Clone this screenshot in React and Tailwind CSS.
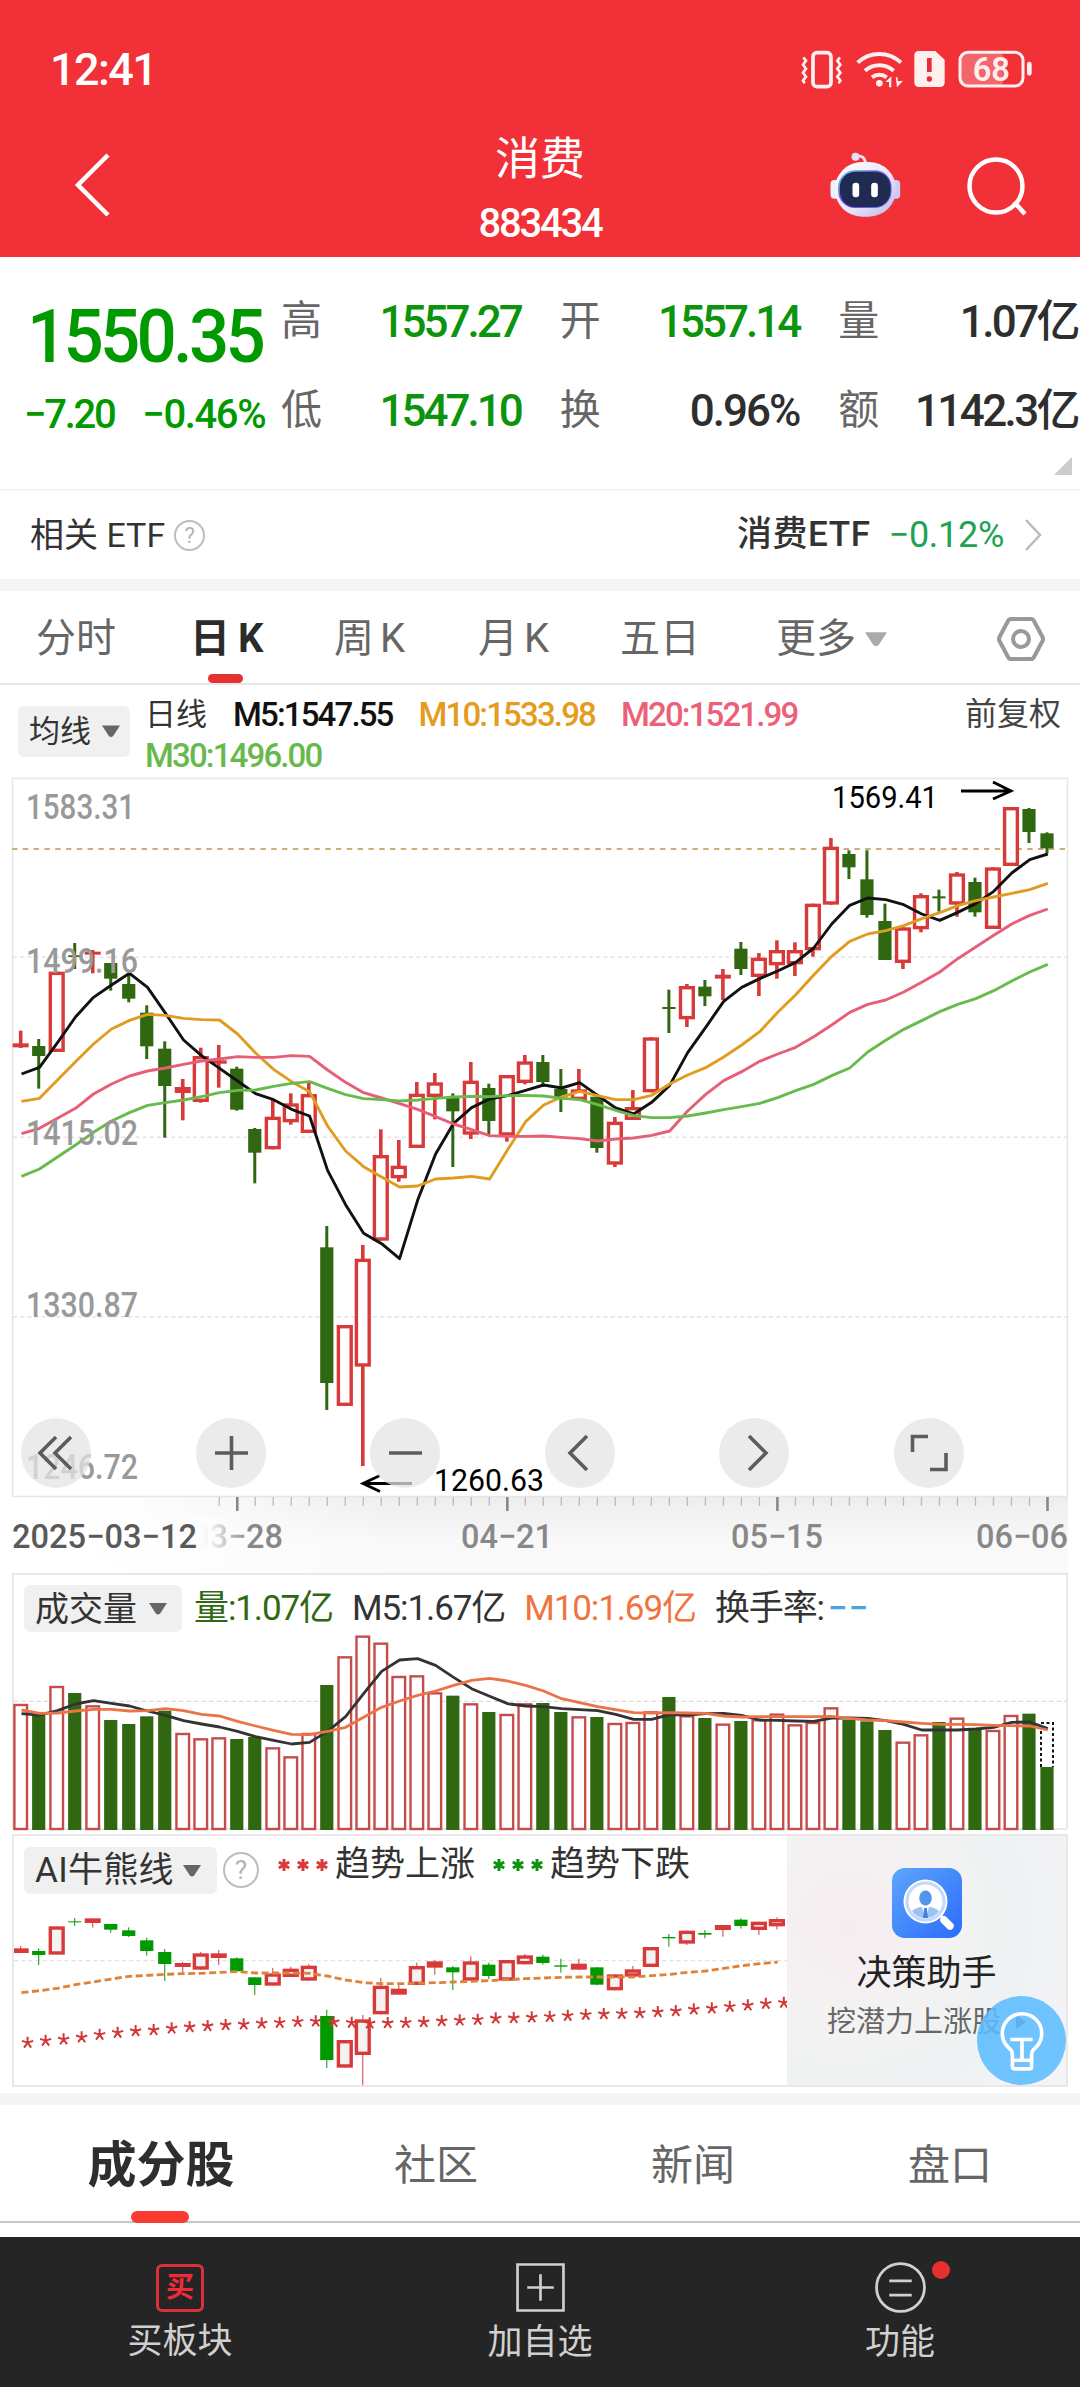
import clsx from "clsx";

// Chart points are kept in thirds of a pixel, measured from the top of each panel's canvas.
const STEP = 18.005;
const cx = (i) => 20.7 + i * STEP;

// [direction, high, bodyTop, bodyBottom, low]
const CANDLES = [
  ["r", 782, 820, 832, 834], ["g", 807, 828, 858, 956], ["r", 605, 605, 846, 846], ["g", 519, 556, 561, 597],
  ["r", 540, 545, 554, 610], ["g", 579, 579, 626, 662], ["g", 612, 642, 686, 697], ["g", 706, 728, 829, 867],
  ["g", 814, 836, 948, 1103], ["r", 927, 951, 969, 1051], ["r", 833, 858, 996, 998], ["r", 825, 871, 881, 953],
  ["g", 890, 896, 1019, 1022], ["g", 1074, 1077, 1148, 1240], ["r", 987, 1040, 1138, 1138], ["r", 970, 1000, 1057, 1064],
  ["r", 938, 972, 1089, 1089], ["g", 1368, 1432, 1839, 1920], ["r", 1665, 1665, 1908, 1908], ["r", 1425, 1466, 1790, 2088],
  ["r", 1078, 1155, 1412, 1412], ["r", 1110, 1187, 1225, 1235], ["r", 936, 971, 1134, 1134], ["r", 909, 937, 981, 1048],
  ["g", 970, 981, 1024, 1191], ["r", 876, 932, 1094, 1107], ["g", 941, 954, 1053, 1094], ["r", 915, 915, 1097, 1115],
  ["r", 855, 874, 939, 943], ["g", 855, 876, 936, 951], ["g", 897, 957, 982, 1026], ["r", 897, 958, 990, 990],
  ["g", 972, 980, 1134, 1148], ["r", 1041, 1055, 1184, 1191], ["r", 960, 1011, 1050, 1050], ["r", 802, 802, 967, 967],
  ["g", 659, 711, 717, 789], ["r", 642, 648, 748, 771], ["g", 630, 650, 679, 708], ["r", 597, 614, 626, 690],
  ["g", 516, 536, 597, 615], ["r", 549, 563, 621, 678], ["r", 511, 540, 586, 626], ["r", 517, 540, 583, 618],
  ["r", 401, 401, 541, 560], ["r", 204, 230, 404, 404], ["g", 241, 252, 292, 327], ["g", 241, 328, 435, 443],
  ["g", 401, 453, 570, 570], ["r", 472, 472, 579, 597], ["r", 370, 375, 478, 487], ["g", 359, 379, 385, 425],
  ["r", 306, 310, 404, 440], ["g", 323, 336, 427, 440], ["r", 292, 292, 477, 477], ["r", 111, 111, 288, 288],
  ["g", 114, 117, 186, 219], ["g", 187, 190, 235, 250],
];

const MA5 = [912, 892, 818, 741, 682, 645, 610, 652, 730, 810, 857, 895, 933, 971, 989, 1018, 1038, 1201, 1304, 1390, 1421, 1466, 1291, 1152, 1060, 1013, 987, 977, 961, 945, 954, 938, 976, 1014, 1032, 997, 946, 848, 772, 694, 652, 626, 603, 577, 534, 462, 406, 384, 389, 404, 432, 451, 427, 401, 364, 309, 269, 252];
const MA10 = [994, 985, 930, 875, 822, 777, 751, 733, 736, 745, 749, 750, 792, 849, 898, 935, 965, 1068, 1143, 1190, 1221, 1251, 1248, 1227, 1224, 1219, 1227, 1139, 1055, 1005, 981, 964, 977, 989, 989, 976, 942, 915, 893, 861, 825, 785, 727, 674, 615, 559, 514, 492, 482, 467, 446, 428, 407, 392, 381, 370, 359, 340];
const MA20 = [1091, 1075, 1045, 1015, 972, 942, 918, 903, 894, 883, 873, 867, 860, 862, 862, 857, 859, 900, 937, 968, 984, 1001, 1018, 1040, 1062, 1079, 1097, 1099, 1099, 1098, 1102, 1106, 1113, 1107, 1104, 1096, 1083, 1023, 973, 932, 905, 874, 852, 832, 800, 765, 727, 703, 690, 666, 637, 606, 566, 531, 496, 462, 436, 417];
const MA30 = [1219, 1197, 1161, 1125, 1087, 1053, 1028, 1006, 998, 990, 980, 968, 961, 960, 949, 940, 935, 955, 974, 986, 989, 993, 990, 985, 981, 979, 980, 977, 976, 978, 985, 989, 1004, 1021, 1037, 1043, 1043, 1038, 1029, 1019, 1010, 1000, 983, 962, 943, 917, 894, 846, 811, 778, 752, 725, 703, 686, 662, 633, 606, 583];

const VOLUMES = [432, 462, 378, 399, 436, 480, 492, 469, 452, 519, 535, 532, 537, 531, 562, 589, 519, 375, 289, 227, 248, 348, 346, 397, 407, 430, 456, 462, 430, 429, 456, 469, 471, 489, 486, 454, 411, 466, 474, 491, 483, 478, 461, 493, 486, 442, 480, 484, 510, 545, 523, 486, 473, 508, 510, 465, 461, 620];
const VMA5 = [461, 465, 452, 432, 422, 430, 438, 453, 466, 482, 492, 501, 514, 530, 541, 552, 547, 514, 470, 401, 334, 300, 296, 316, 352, 386, 409, 431, 438, 440, 446, 449, 452, 463, 478, 478, 464, 465, 461, 460, 466, 480, 481, 483, 484, 474, 474, 475, 482, 493, 510, 510, 510, 507, 502, 487, 486, 506];
const VMA10 = [450, 460, 459, 453, 448, 448, 453, 452, 446, 452, 463, 468, 484, 498, 511, 523, 524, 514, 502, 472, 442, 423, 406, 393, 376, 361, 355, 363, 376, 393, 416, 428, 440, 449, 458, 459, 458, 459, 460, 468, 471, 470, 470, 470, 470, 469, 475, 480, 482, 486, 490, 493, 493, 494, 496, 497, 498, 510];

const AI_CANDLES = [
  ["r", 348, 355, 369, 369], ["g", 355, 363, 375, 405], ["r", 289, 289, 374, 374], ["g", 264, 274, 277, 288],
  ["r", 265, 265, 279, 293], ["g", 282, 282, 299, 308], ["g", 292, 301, 318, 321], ["g", 323, 331, 363, 377],
  ["g", 357, 366, 402, 453], ["r", 396, 399, 411, 430], ["r", 366, 370, 419, 419], ["r", 360, 370, 384, 405],
  ["g", 382, 385, 424, 424], ["g", 442, 442, 465, 495], ["r", 414, 430, 467, 467], ["r", 410, 416, 441, 441],
  ["r", 402, 407, 452, 452], ["g", 539, 558, 690, 714], ["r", 630, 630, 713, 713], ["r", 555, 568, 675, 768],
  ["r", 444, 467, 553, 553], ["r", 460, 476, 494, 494], ["r", 398, 408, 465, 465], ["r", 390, 394, 413, 434],
  ["g", 408, 412, 427, 480], ["r", 379, 394, 452, 452], ["g", 398, 404, 438, 448], ["r", 390, 390, 452, 452],
  ["r", 372, 376, 403, 403], ["g", 374, 380, 399, 404], ["g", 386, 406, 410, 428], ["r", 386, 401, 419, 419],
  ["g", 412, 412, 464, 466], ["r", 433, 433, 481, 481], ["r", 408, 418, 440, 440], ["r", 351, 351, 411, 411],
  ["g", 312, 321, 325, 350], ["r", 302, 302, 341, 345], ["g", 300, 309, 314, 325], ["r", 285, 285, 300, 320],
  ["g", 265, 269, 288, 296], ["r", 275, 275, 300, 315], ["r", 262, 267, 289, 298],
];
const AI_LINE = [488, 482, 475, 464, 456, 447, 439, 436, 433, 431, 430, 427, 425, 429, 429, 429, 430, 438, 450, 458, 461, 461, 460, 458, 456, 454, 452, 449, 446, 444, 442, 441, 441, 441, 441, 437, 433, 427, 423, 415, 407, 401, 396];
const AI_STARS = [638, 632, 628, 622, 614, 608, 603, 600, 595, 591, 588, 585, 583, 580, 578, 575, 574, 576, 578, 580, 579, 578, 576, 573, 571, 569, 565, 564, 562, 560, 557, 554, 552, 551, 549, 546, 543, 538, 535, 530, 526, 521, 518];

const STATS = [
  { label: "高", value: "1557.27", tone: "tracking-[-3px] text-[#0d940d]" },
  { label: "开", value: "1557.14", tone: "tracking-[-3px] text-[#0d940d]" },
  { label: "量", value: "1.07亿", tone: "tracking-[-2.600px] text-[#2e2e2e]" },
  { label: "低", value: "1547.10", tone: "tracking-[-3px] text-[#0d940d]" },
  { label: "换", value: "0.96%", tone: "tracking-[-2px] text-[#2e2e2e]" },
  { label: "额", value: "1142.3亿", tone: "tracking-[-2.600px] text-[#2e2e2e]" },
];

const points = (list) => list.map((v, i) => `${cx(i) + 0.8},${v / 3}`).join(" ");

function Candle({ i, data, green, wick, fill = "#fff" }) {
  const [dir, h, t, b, l] = data.map((v) => (typeof v === "number" ? v / 3 : v));
  const x = cx(i);
  if (dir === "g") {
    return (
      <g fill={green}>
        <rect x={x - wick / 2} y={h} width={wick} height={l - h} />
        <rect x={x - 6.6} y={t} width="13.2" height={b - t} />
      </g>
    );
  }
  const solid = b - t < 6.5;
  return (
    <g fill="#d83a3a">
      <rect x={x - wick / 2} y={h} width={wick} height={l - h} />
      {solid ? (
        <rect x={x - 8} y={t} width="16" height={b - t} />
      ) : (
        <rect x={x - 6.4} y={t + 1.7} width="12.8" height={b - t - 3.4} fill={fill} stroke="#d83a3a" strokeWidth="3.4" />
      )}
    </g>
  );
}

function Star({ x, y }) {
  return (
    <path
      d={`M${x} ${y}v-6M${x} ${y}l5.6-1.8M${x} ${y}l3.5 4.9M${x} ${y}l-3.5 4.9M${x} ${y}l-5.6-1.8`}
      stroke="#d03838"
      strokeWidth="2"
      fill="none"
    />
  );
}

function Caret({ className }) {
  return (
    <svg viewBox="0 0 18 12" className={clsx("shrink-0", className)}>
      <path d="M0 0h18l-6.500 10q-2.500 3-5 0z" fill="currentColor" />
    </svg>
  );
}

function HelpMark({ className, children = "?" }) {
  return (
    <span className={clsx("flex shrink-0 items-center justify-center rounded-full border-2 border-[#bdbdbd] text-[#b3b3b3]", className)}>
      {children}
    </span>
  );
}

function StatusBar() {
  return (
    <div className="flex h-[138px] items-start justify-between pt-[46px] pr-[46px] pl-[50px]">
      <div className="text-[45px]/[48px] font-medium tracking-[-1.600px]">12:41</div>
      <svg viewBox="36 0 702 120" className="mt-[4px] h-[40px] w-[234px]" fill="none" stroke="#fff0f0">
        <rect x="75" y="8" width="54" height="102" rx="12" strokeWidth="11" />
        <path d="M46 22l8 10-9 12 9 12-9 12 9 12-9 12 5 8M156 22l-8 10 9 12-9 12 9 12-9 12 9 12-5 8" strokeWidth="8" />
        <path d="M209 38a94 94 0 0 1 130 0M231 62a64 64 0 0 1 86 0M252 82a36 36 0 0 1 44 0" strokeWidth="12" />
        <circle cx="274" cy="100" r="10" fill="#fff0f0" stroke="none" />
        <path d="M292 96l18-17v33h-7V96zM323 80v32V82h6v12l16-2-18 20z" fill="#fff0f0" stroke="none" />
        <path d="M393 3h49l28 26v68q0 14-14 14h-63q-14 0-14-14V17q0-14 14-14z" fill="#fff0f0" stroke="none" />
        <path d="M424 24v42" stroke="#e72d36" strokeWidth="14" />
        <circle cx="424" cy="87" r="8" fill="#e72d36" stroke="none" />
        <path d="M534 7h110v100H534q-18 0-18-18V25q0-18 18-18z" fill="#f5666b" stroke="none" />
        <rect x="516" y="7" width="189" height="101" rx="24" strokeWidth="9" />
        <path d="M724 42v28" strokeWidth="14" strokeLinecap="round" />
        <text x="610" y="93" textAnchor="middle" fontFamily="Roboto" fontWeight="600" fontSize="98" textLength="112" lengthAdjust="spacingAndGlyphs" fill="#fff0f0" stroke="none">68</text>
      </svg>
    </div>
  );
}

function Robot() {
  return (
    <svg viewBox="0 0 212 198" className="h-[66px] w-[71px]">
      <defs>
        <linearGradient id="shell" x1="0" y1="0" x2="1" y2="1">
          <stop offset="0" stopColor="#fff" />
          <stop offset=".55" stopColor="#e9e6fa" />
          <stop offset="1" stopColor="#b9b5ea" />
        </linearGradient>
        <linearGradient id="visor" x1="0" y1="0" x2="1" y2="1">
          <stop offset="0" stopColor="#5fd6df" />
          <stop offset=".5" stopColor="#7d3fe0" />
          <stop offset="1" stopColor="#5f7bf0" />
        </linearGradient>
      </defs>
      <path d="M76 12q28-4 30 22" stroke="#eceafb" strokeWidth="8" fill="none" />
      <circle cx="76" cy="14" r="12" fill="#e3e0f8" />
      <rect x="1" y="84" width="28" height="56" rx="12" fill="#f1effc" />
      <rect x="182" y="84" width="28" height="56" rx="12" fill="#cfcaf4" />
      <rect x="14" y="30" width="184" height="164" rx="82" fill="url(#shell)" />
      <rect x="24" y="55" width="160" height="113" rx="50" fill="url(#visor)" />
      <rect x="29" y="59" width="152" height="106" rx="47" fill="#1f2b50" />
      <rect x="67" y="92" width="20" height="44" rx="9" fill="#fff" />
      <rect x="123" y="92" width="20" height="44" rx="9" fill="#fff" />
    </svg>
  );
}

function Header() {
  return (
    <header className="h-[257px] bg-[#f13037] text-white">
      <StatusBar />
      <div className="flex h-[110px] items-start">
        <div className="w-[360px] pt-[14px] pl-[74px]">
          <svg viewBox="0 0 36 66" className="h-[66px] w-[36px]">
            <path d="M34 3L4 33l30 30" fill="none" stroke="#fff" strokeWidth="4.500" />
          </svg>
        </div>
        <div className="w-[360px] text-center">
          <h1 className="pt-[2px] text-[45px]/[40px]">消费</h1>
          <p className="mt-[24px] text-[40px]/[40px] font-medium tracking-[-2.200px]">883434</p>
        </div>
        <div className="flex w-[360px] justify-end gap-[66px] pt-[14px] pr-[53px]">
          <Robot />
          <svg viewBox="0 0 60 60" className="mt-[5px] h-[60px] w-[60px]" fill="none" stroke="#fff">
            <circle cx="29" cy="29" r="26.500" strokeWidth="4.500" />
            <path d="M47 45l11 12" strokeWidth="4.500" />
          </svg>
        </div>
      </div>
    </header>
  );
}

function Quote() {
  return (
    <section className="flex h-[234px] border-b-2 border-[#f4f4f4]">
      <div className="w-[281px] text-[#009900]">
        <div className="mt-[42px] ml-[27px] origin-left scale-x-[.945] text-[75px]/[75px] font-medium tracking-[-4px]">1550.35</div>
        <div className="mt-[21px] ml-[24px] flex gap-[28px] text-[40px]/[40px] font-medium tracking-[-2.300px]">
          <span>−7.20</span>
          <span className="tracking-[-1.400px]">−0.46%</span>
        </div>
      </div>
      <div className="flex flex-1 flex-col">
        <div className="grid grid-cols-3 gap-x-[37px] pt-[35px]">
          {STATS.map((s) => (
            <div key={s.label} className="mb-[29px] flex h-[60px] items-center justify-between">
              <span className="text-[41px] text-[#666]">{s.label}</span>
              <span className={clsx("pr-[2px] text-[44px] font-medium", s.tone)}>{s.value}</span>
            </div>
          ))}
        </div>
        <svg viewBox="0 0 18 18" className="-mt-[13px] mr-[8px] h-[18px] w-[18px] self-end">
          <path d="M18 0v18H0z" fill="#ccc" />
        </svg>
      </div>
    </section>
  );
}

function RelatedEtf() {
  return (
    <section className="flex h-[88px] items-center justify-between pr-[38px] pl-[30px]">
      <div className="flex items-center gap-[9px] text-[34px] text-[#333]">
        <span>相关 ETF</span>
        <HelpMark className="h-[31px] w-[31px] text-[22px]" />
      </div>
      <div className="flex items-center text-[35px] font-medium text-[#333]">
        <span className="tracking-[.600px]">消费ETF</span>
        <span className="ml-[18px] text-[36px] font-normal tracking-[-0.300px] text-[#21a352]">−0.12%</span>
        <svg viewBox="0 0 18 32" className="ml-[20px] h-[32px] w-[18px]">
          <path d="M2 1l14 15L2 31" fill="none" stroke="#bbb" strokeWidth="2.500" />
        </svg>
      </div>
    </section>
  );
}

function PeriodTabs() {
  return (
    <nav className="flex h-[106px] items-center border-t-[12px] border-b-2 border-t-[#f4f4f4] border-b-[#e8e8e8] pt-[4px] pl-[36px] text-[40px] text-[#666]">
      <span className="w-[154px]">分时</span>
      <span className="relative flex w-[144px] items-center gap-[8px] font-bold text-[#2b2b2b]">
        日<span>K</span>
        <i className="absolute top-[65px] left-[18px] h-[9px] w-[35px] rounded-full bg-[#e63131]" />
      </span>
      <span className="flex w-[144px] gap-[6px]">周<span>K</span></span>
      <span className="flex w-[142px] gap-[6px]">月<span>K</span></span>
      <span className="w-[156px]">五日</span>
      <span className="flex items-center gap-[9px]">
        更多
        <Caret className="h-[19px] w-[22px] text-[#aaa]" />
      </span>
      <svg viewBox="0 0 48 46" className="mr-[35px] ml-auto h-[46px] w-[48px]" fill="none" stroke="#999" strokeWidth="4">
        <path d="M14 3h20q2 0 3 2l8.500 16q1 2 0 4L37 41q-1 2-3 2H14q-2 0-3-2L2.500 25q-1-2 0-4L11 5q1-2 3-2z" />
        <circle cx="24" cy="23" r="8" />
      </svg>
    </nav>
  );
}

function MaLegend() {
  return (
    <div className="flex h-[92px] items-start text-[33px]/[41px] font-medium tracking-[-1.850px]">
      <button className="mt-[21px] ml-[18px] flex h-[51px] w-[112px] items-center gap-[11px] rounded-[6px] bg-[#f0f0f0] pl-[11px] text-[31px] font-normal tracking-normal text-[#333]">
        均线
        <Caret className="h-[13px] w-[18px] text-[#666]" />
      </button>
      <div className="ml-[15px] flex w-[700px] flex-wrap gap-x-[26px] pt-[9px]">
        <span className="text-[31px] font-normal tracking-normal text-[#333]">日线</span>
        <span className="text-[#111]">M5:1547.55</span>
        <span className="text-[#e39c1c]">M10:1533.98</span>
        <span className="text-[#ec6078]">M20:1521.99</span>
        <span className="text-[#67b94c]">M30:1496.00</span>
      </div>
      <span className="mr-[19px] ml-auto pt-[9px] text-[32px] font-normal tracking-normal text-[#444]">前复权</span>
    </div>
  );
}

const TOOL_ICONS = [
  <path key="first" d="M25 19L9 35l16 16M40 19L24 35l16 16" transform="translate(10)" />,
  <path key="in" d="M19 35h33M35.500 18v34" />,
  <path key="out" d="M19 35h33" />,
  <path key="prev" d="M42 18L25 35l17 17" />,
  <path key="next" d="M30 18l17 17-17 17" />,
  <path key="full" d="M18.500 34V18.500H34M52 35v16.500H36" />,
];

function KLineChart() {
  const labels = [["1583.31", 819, 107], ["1499.16", 973, 110], ["1415.02", 1145, 110], ["1330.87", 1317, 110], ["1246.72", 1479, 110]];
  const dates = [["03-28", 237], ["04-21", 507], ["05-15", 777], ["06-06", 1022]];
  return (
    <section className="relative h-[796px]">
      <svg viewBox="0 7 1080 796" className="block h-[796px] w-[1080px]" fontFamily="Roboto" fontWeight="500">
        <defs>
          <linearGradient id="axis" x1="0" y1="0" x2="0" y2="1">
            <stop offset="0" stopColor="#ededed" />
            <stop offset=".6" stopColor="#f9f9f9" />
            <stop offset="1" stopColor="#fafafa" />
          </linearGradient>
          <linearGradient id="axisFade" x1="0" y1="0" x2="1" y2="0">
            <stop offset="0" stopColor="#fff" />
            <stop offset=".3" stopColor="#fff" stopOpacity=".9" />
            <stop offset="1" stopColor="#fff" stopOpacity="0" />
          </linearGradient>
          <linearGradient id="fade" x1="0" y1="0" x2="1" y2="0">
            <stop offset="0" stopColor="#fdfdfd" />
            <stop offset=".2" stopColor="#fdfdfd" stopOpacity=".92" />
            <stop offset="1" stopColor="#fbfbfb" stopOpacity="0" />
          </linearGradient>
        </defs>
        <rect x="13" y="727" width="1055" height="77" fill="url(#axis)" />
        <rect x="12" y="727" width="400" height="77" fill="url(#axisFade)" />
        <rect x="12.500" y="8.500" width="1055" height="718" fill="none" stroke="#e6e6e6" strokeWidth="1.500" />
        {[187.3, 367.3, 546.8].map((y) => (
          <path key={y} d={`M13 ${y}H1067`} stroke="#e4e4e4" strokeWidth="1.500" strokeDasharray="4 3.200" />
        ))}
        <path d="M12 79H1067" stroke="#cfac7c" strokeWidth="1.800" strokeDasharray="5.400 5.400" />

        {CANDLES.map((c, i) => (
          <Candle key={i} i={i} data={c} green="#306812" wick={c[0] === "g" ? 3 : 3.6} />
        ))}
        <g fill="none" strokeWidth="2.900" strokeLinejoin="round">
          <polyline points={points(MA5)} stroke="#111" />
          <polyline points={points(MA10)} stroke="#e09c20" />
          <polyline points={points(MA20)} stroke="#e65f76" />
          <polyline points={points(MA30)} stroke="#67bb4c" />
        </g>

        {labels.map(([t, y, w]) => (
          <text key={t} x="26" y={y - 770} fontSize="35" textLength={w + 2} lengthAdjust="spacingAndGlyphs" fill="#999">{t}</text>
        ))}
        <g fill="#000" stroke="#000" strokeWidth="0" fontSize="31" fontWeight="400">
          <text x="832" y="37.500" textLength="106" lengthAdjust="spacingAndGlyphs">1569.41</text>
          <text x="434" y="720.500" textLength="110" lengthAdjust="spacingAndGlyphs">1260.63</text>
          <path d="M961 21h49M993 12l18 9-18 8M412 713.500h-49M380 705.500l-17 8 17 8" fill="none" strokeWidth="2.800" />
        </g>

        {Array.from({ length: 47 }, (_, k) => k + 11).map((i) => {
          const major = i % 15 === 12;
          return <path key={i} d={`M${cx(i) + 0.5} 727v${major ? 14 : 9}`} stroke={major ? "#888" : "#bbb"} strokeWidth={major ? 2.6 : 1.3} />;
        })}
        {dates.map(([t, x]) => (
          <text key={t} x={x} y="777.500" textAnchor="middle" fontSize="34" textLength="92" lengthAdjust="spacingAndGlyphs" fill="#888">{t.replace("-", "−")}</text>
        ))}
        {/* the first date sits over the scrolled-out part of the axis */}
        <rect x="188" y="748" width="12" height="34" fill="#fdfdfd" />
        <rect x="200" y="748" width="50" height="34" fill="url(#fade)" />
        <text x="12" y="777.500" fontSize="34" textLength="185" lengthAdjust="spacingAndGlyphs" fill="#5a5a5a">2025−03−12</text>
      </svg>
      <div className="absolute top-[641px] left-[21px] flex gap-[104.600px]">
        {TOOL_ICONS.map((icon) => (
          <button key={icon.key} className="h-[70px] w-[70px] rounded-full bg-[#e4e4e4]/75">
            <svg viewBox="0 0 70 70" fill="none" stroke="#5c5c5c" strokeWidth="3.600">{icon}</svg>
          </button>
        ))}
      </div>
    </section>
  );
}

function VolumePanel() {
  return (
    <section className="ml-[12px] h-[256px] w-[1056px] border-x-2 border-t-2 border-[#e8e8e8]">
      <div className="flex h-[56px] items-start pt-[10px] pl-[10px] text-[34px]/[48px]">
        <button className="flex h-[47px] w-[158px] items-center gap-[12px] rounded-[6px] bg-[#f0f0f0] pl-[11px] text-[#333]">
          成交量
          <Caret className="h-[12px] w-[18px] text-[#666]" />
        </button>
        <div className="flex gap-[19px] pl-[12px] text-[35px] tracking-[-1.100px]">
          <span className="text-[#306812]">量:1.07亿</span>
          <span className="text-[#333]">M5:1.67亿</span>
          <span className="text-[#f0743f]">M10:1.69亿</span>
          <span className="text-[#333]">换手率:<span className="ml-[4px] font-medium tracking-[1px] text-[#4ba6e0]">−−</span></span>
        </div>
      </div>
      <svg viewBox="14 71 1052 198" className="block h-[198px] w-[1052px] overflow-visible">
        <path d="M14 141.300H1066" stroke="#dcdcdc" strokeWidth="1.300" strokeDasharray="4.500 3" />
        <path d="M14 269H1066" stroke="#e8e8e8" strokeWidth="2" />
        {VOLUMES.map((v, i) => {
          const y = v / 3;
          const up = CANDLES[i][0] === "r";
          return up ? (
            <rect key={i} x={cx(i) - 6.3} y={y + 1} width="12.600" height={268 - y} fill="#fff" stroke="#c64c4c" strokeWidth="2.400" />
          ) : (
            <rect key={i} x={cx(i) - 6.6} y={y} width="13.200" height={270 - y} fill="#306812" />
          );
        })}
        {/* projected full-day volume of the running session */}
        <path d="M1041 207V163h12v44" fill="#fff" stroke="#111" strokeWidth="2" strokeDasharray="3 2.500" />
        <g fill="none" strokeWidth="2.800" strokeLinejoin="round">
          <polyline points={points(VMA5)} stroke="#333" />
          <polyline points={points(VMA10)} stroke="#ea7447" />
        </g>
      </svg>
    </section>
  );
}

function Stars({ className }) {
  return (
    <svg viewBox="0 0 50 14" className={clsx("h-[14px] w-[50px]", className)} stroke="currentColor" strokeWidth="3">
      {[6, 25, 44].map((x) => (
        <path key={x} d={`M${x} 1v12M${x - 5.2} 4l10.400 6M${x + 5.2} 4l-10.400 6`} />
      ))}
    </svg>
  );
}

function AiPanel() {
  return (
    <section className="mt-[5px] ml-[12px] flex h-[253px] w-[1056px] border-2 border-[#e8e8e8]">
      <div className="w-[773px]">
        <div className="flex h-[62px] items-start pt-[11px] pl-[10px] text-[35px]/[36px] text-[#333]">
          <button className="flex h-[47px] w-[193px] items-center gap-[9px] rounded-[6px] bg-[#f0f0f0] pl-[11px] tracking-[.300px]">
            AI牛熊线
            <Caret className="h-[12px] w-[18px] text-[#666]" />
          </button>
          <HelpMark className="mt-[5px] ml-[6px] h-[36px] w-[36px] text-[26px]" />
          <Stars className="mt-[11px] ml-[19px] text-[#d83a3a]" />
          <span className="ml-[7px]">趋势上涨</span>
          <Stars className="mt-[11px] ml-[18px] text-[#0d930d]" />
          <span className="ml-[7px]">趋势下跌</span>
        </div>
        <svg viewBox="14 68 773 187" className="block h-[187px] w-[773px]">
          <path d="M14 130.700H787" stroke="#e2e2e2" strokeWidth="1.300" strokeDasharray="4 3.200" />
          {AI_CANDLES.map((c, i) => (
            <Candle key={i} i={i} data={c} green="#009900" wick={1} fill="#f4f2f2" />
          ))}
          <polyline points={points(AI_LINE)} fill="none" stroke="#dd8238" strokeWidth="2.800" strokeDasharray="7 3.500" />
          {AI_STARS.map((v, i) => (
            <Star key={i} x={27.6 + i * STEP} y={v / 3} />
          ))}
        </svg>
      </div>
      <div className="relative flex flex-1 flex-col items-center bg-[radial-gradient(circle_at_22%_36%,#f6ecef_0,#f4f2f3_35%,#eef2f2_62%,#f4f3f5_90%)]">
        <svg viewBox="0 0 70 70" className="mt-[32px] h-[70px] w-[70px]">
          <defs>
            <linearGradient id="tile" x1="0" y1="0" x2="1" y2="1">
              <stop offset="0" stopColor="#5ea5fd" />
              <stop offset="1" stopColor="#2b6cfa" />
            </linearGradient>
          </defs>
          <rect width="70" height="70" rx="13" fill="url(#tile)" />
          <path d="M52 52l6 6" stroke="#fff" strokeWidth="7.500" strokeLinecap="round" />
          <path d="M47 46l6 6" stroke="#fff" strokeWidth="3" />
          <circle cx="33.500" cy="33.500" r="22" fill="#fff" />
          <circle cx="33.500" cy="33.500" r="18.500" fill="#fff" stroke="#c3d8fb" strokeWidth="3" />
          <ellipse cx="33.500" cy="30" rx="6.300" ry="7.500" fill="#5394ef" />
          <path d="M20 43q5-4 10-4l3 11h-1q-8-1-12-7zM47 43q-5-4-10-4l-3 11h1q8-1 12-7z" fill="#9dc0f5" />
          <path d="M32.200 40h2.600l1.200 10h-5z" fill="#3f7fe8" />
        </svg>
        <p className="mt-[16px] text-[35px]/[40px] text-[#222]">决策助手</p>
        <p className="mt-[10px] flex items-center gap-[15px] text-[29px]/[36px] whitespace-nowrap text-[#666]">
          <span>挖潜力上涨股</span>
          <svg viewBox="0 0 10 14" className="h-[14px] w-[10px]"><path d="M0 0l10 7-10 7z" fill="#555" /></svg>
        </p>
        <button className="absolute right-0 bottom-0 h-[89px] w-[89px] rounded-full bg-[#5cbcff]/88">
          <svg viewBox="0 0 88 88" fill="none" stroke="#fff" strokeWidth="3.600" strokeLinejoin="round">
            <path d="M35 70V58q0-4-4-7-6-6-6-14a19.500 19.500 0 0 1 39 0q0 8-6 14-4 3-4 7v12q0 2-2 2H37q-2 0-2-2z" />
            <path d="M33 43h22M44.500 43v20M36 63.500h18" />
          </svg>
        </button>
      </div>
    </section>
  );
}

function SectionTabs() {
  return (
    <nav className="mt-[6px] flex h-[130px] items-center border-t-[12px] border-b-2 border-t-[#f4f4f4] border-b-[#c8c8c8] pt-[5px] text-[42px] text-[#666]">
      <span className="relative flex w-[322px] justify-center text-[49px] font-bold text-[#2e2e2e]">
        成分股
        <i className="absolute top-[82px] left-[131px] h-[12px] w-[58px] rounded-full bg-[#fa3b31]" />
      </span>
      <span className="w-[228px] text-center">社区</span>
      <span className="w-[286px] text-center">新闻</span>
      <span className="w-[228px] text-center">盘口</span>
    </nav>
  );
}

function BottomBar() {
  return (
    <footer className="mt-[14px] grid h-[150px] grid-cols-3 bg-[#252525] text-[35px]/[40px] text-[#d0d0d0]">
      <div className="flex flex-col items-center pt-[27px]">
        <span className="flex h-[48px] w-[48px] items-center justify-center rounded-[6px] border-3 border-[#d9303a] text-[28px]/[28px] font-bold text-[#ef2b3a]">买</span>
        <span className="mt-[10px]">买板块</span>
      </div>
      <div className="flex flex-col items-center pt-[26px]">
        <svg viewBox="0 0 48 48" className="h-[49px] w-[49px]" fill="none" stroke="#d0d0d0" strokeWidth="2.600">
          <path d="M1.500 1.500h45v45h-45zM11 24h26M24 11v26" />
        </svg>
        <span className="mt-[11px]">加自选</span>
      </div>
      <div className="relative flex flex-col items-center pt-[25px]">
        <svg viewBox="0 0 50 50" className="h-[51px] w-[51px]" fill="none" stroke="#d0d0d0" strokeWidth="2.700">
          <circle cx="25" cy="25" r="23.500" />
          <path d="M14 18.500h22M14 32.500h22" />
        </svg>
        <span className="mt-[10px]">功能</span>
        <i className="absolute top-[24px] left-[212px] h-[18px] w-[18px] rounded-full bg-[#e5302f]" />
      </div>
    </footer>
  );
}

export default function App() {
  return (
    <div className="h-[2387px] w-[1080px] overflow-hidden bg-white font-[Roboto,'Noto_Sans_CJK_SC',sans-serif]">
      <Header />
      <Quote />
      <RelatedEtf />
      <PeriodTabs />
      <MaLegend />
      <KLineChart />
      <VolumePanel />
      <AiPanel />
      <SectionTabs />
      <BottomBar />
    </div>
  );
}
